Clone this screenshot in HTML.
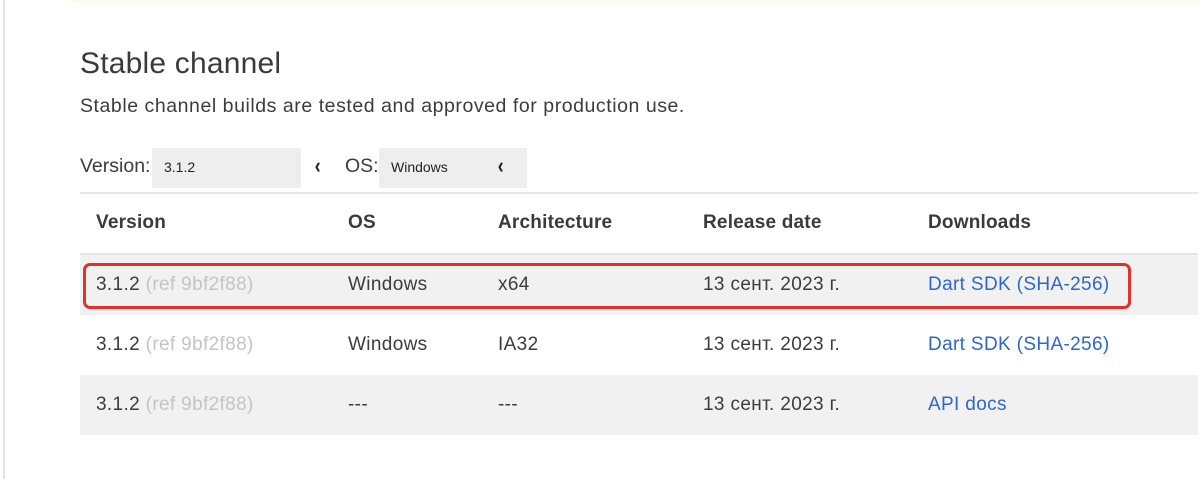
<!DOCTYPE html>
<html><head><meta charset="utf-8"><style>
body{margin:0;width:1200px;height:479px;background:#fff;position:relative;overflow:hidden;font-family:"Liberation Sans",sans-serif;color:#3c3c3c}
.a{position:absolute;white-space:nowrap}
.row{position:absolute;left:80px;width:1118px;height:60px}
.g{background:#f1f1f1}
.t{position:absolute;font-size:19px;line-height:20px;letter-spacing:0.35px}
.h{font-weight:bold;font-size:19px;color:#3a3a3a;letter-spacing:0.2px}
.ref{color:#c4c4c4}
.lk{color:#2c67d0}
.ch{font-size:22px;font-weight:bold;color:#222;transform:scaleX(0.8)}
</style></head><body>
<div class="a" style="left:3px;top:0;width:2px;height:479px;background:#e2e2e2"></div>
<div class="a" style="left:70px;top:0;width:1130px;height:3px;background:#fdfaee"></div>
<div class="a" style="left:80px;top:47px;font-size:30px;color:#3a3a3a;letter-spacing:0.2px">Stable channel</div>
<div class="a" style="left:80px;top:95px;font-size:19.5px;letter-spacing:0.55px">Stable channel builds are tested and approved for production use.</div>
<div class="a" style="left:80px;top:155px;font-size:19.5px">Version:</div>
<div class="a" style="left:152px;top:148px;width:149px;height:40px;background:#eeeeee"></div>
<div class="a" style="left:164px;top:159px;font-size:14px;color:#222">3.1.2</div>
<div class="a ch" style="left:314px;top:153px">‹</div>
<div class="a" style="left:345px;top:155px;font-size:19.5px">OS:</div>
<div class="a" style="left:379px;top:148px;width:148px;height:40px;background:#eeeeee"></div>
<div class="a" style="left:391px;top:159px;font-size:14px;color:#222">Windows</div>
<div class="a ch" style="left:497px;top:153px">‹</div>
<div class="a" style="left:80px;top:192px;width:1118px;height:2px;background:#e6e6e6"></div>
<div class="row" style="top:194px">
<div class="t h" style="left:16px;top:19px">Version</div><div class="t h" style="left:268px;top:19px">OS</div><div class="t h" style="left:418px;top:19px">Architecture</div><div class="t h" style="left:623px;top:19px">Release date</div><div class="t h" style="left:848px;top:19px">Downloads</div></div>
<div class="a" style="left:80px;top:253px;width:1118px;height:2px;background:#e6e6e6"></div>
<div class="row g" style="top:255px">
<div class="t" style="left:16px;top:20px">3.1.2 <span class="ref">(ref 9bf2f88)</span></div><div class="t" style="left:268px;top:20px">Windows</div><div class="t" style="left:418px;top:20px">x64</div><div class="t" style="left:623px;top:20px">13 сент. 2023 г.</div><div class="t lk" style="left:848px;top:20px">Dart SDK (SHA-256)</div></div>
<div class="a" style="left:83px;top:263px;width:1042px;height:40px;border:3px solid #e0312b;border-radius:7px"></div>
<div class="row" style="top:315px">
<div class="t" style="left:16px;top:20px">3.1.2 <span class="ref">(ref 9bf2f88)</span></div><div class="t" style="left:268px;top:20px">Windows</div><div class="t" style="left:418px;top:20px">IA32</div><div class="t" style="left:623px;top:20px">13 сент. 2023 г.</div><div class="t lk" style="left:848px;top:20px">Dart SDK (SHA-256)</div></div>
<div class="row g" style="top:375px">
<div class="t" style="left:16px;top:20px">3.1.2 <span class="ref">(ref 9bf2f88)</span></div><div class="t" style="left:268px;top:20px">---</div><div class="t" style="left:418px;top:20px">---</div><div class="t" style="left:623px;top:20px">13 сент. 2023 г.</div><div class="t lk" style="left:848px;top:20px">API docs</div></div>
</body></html>
